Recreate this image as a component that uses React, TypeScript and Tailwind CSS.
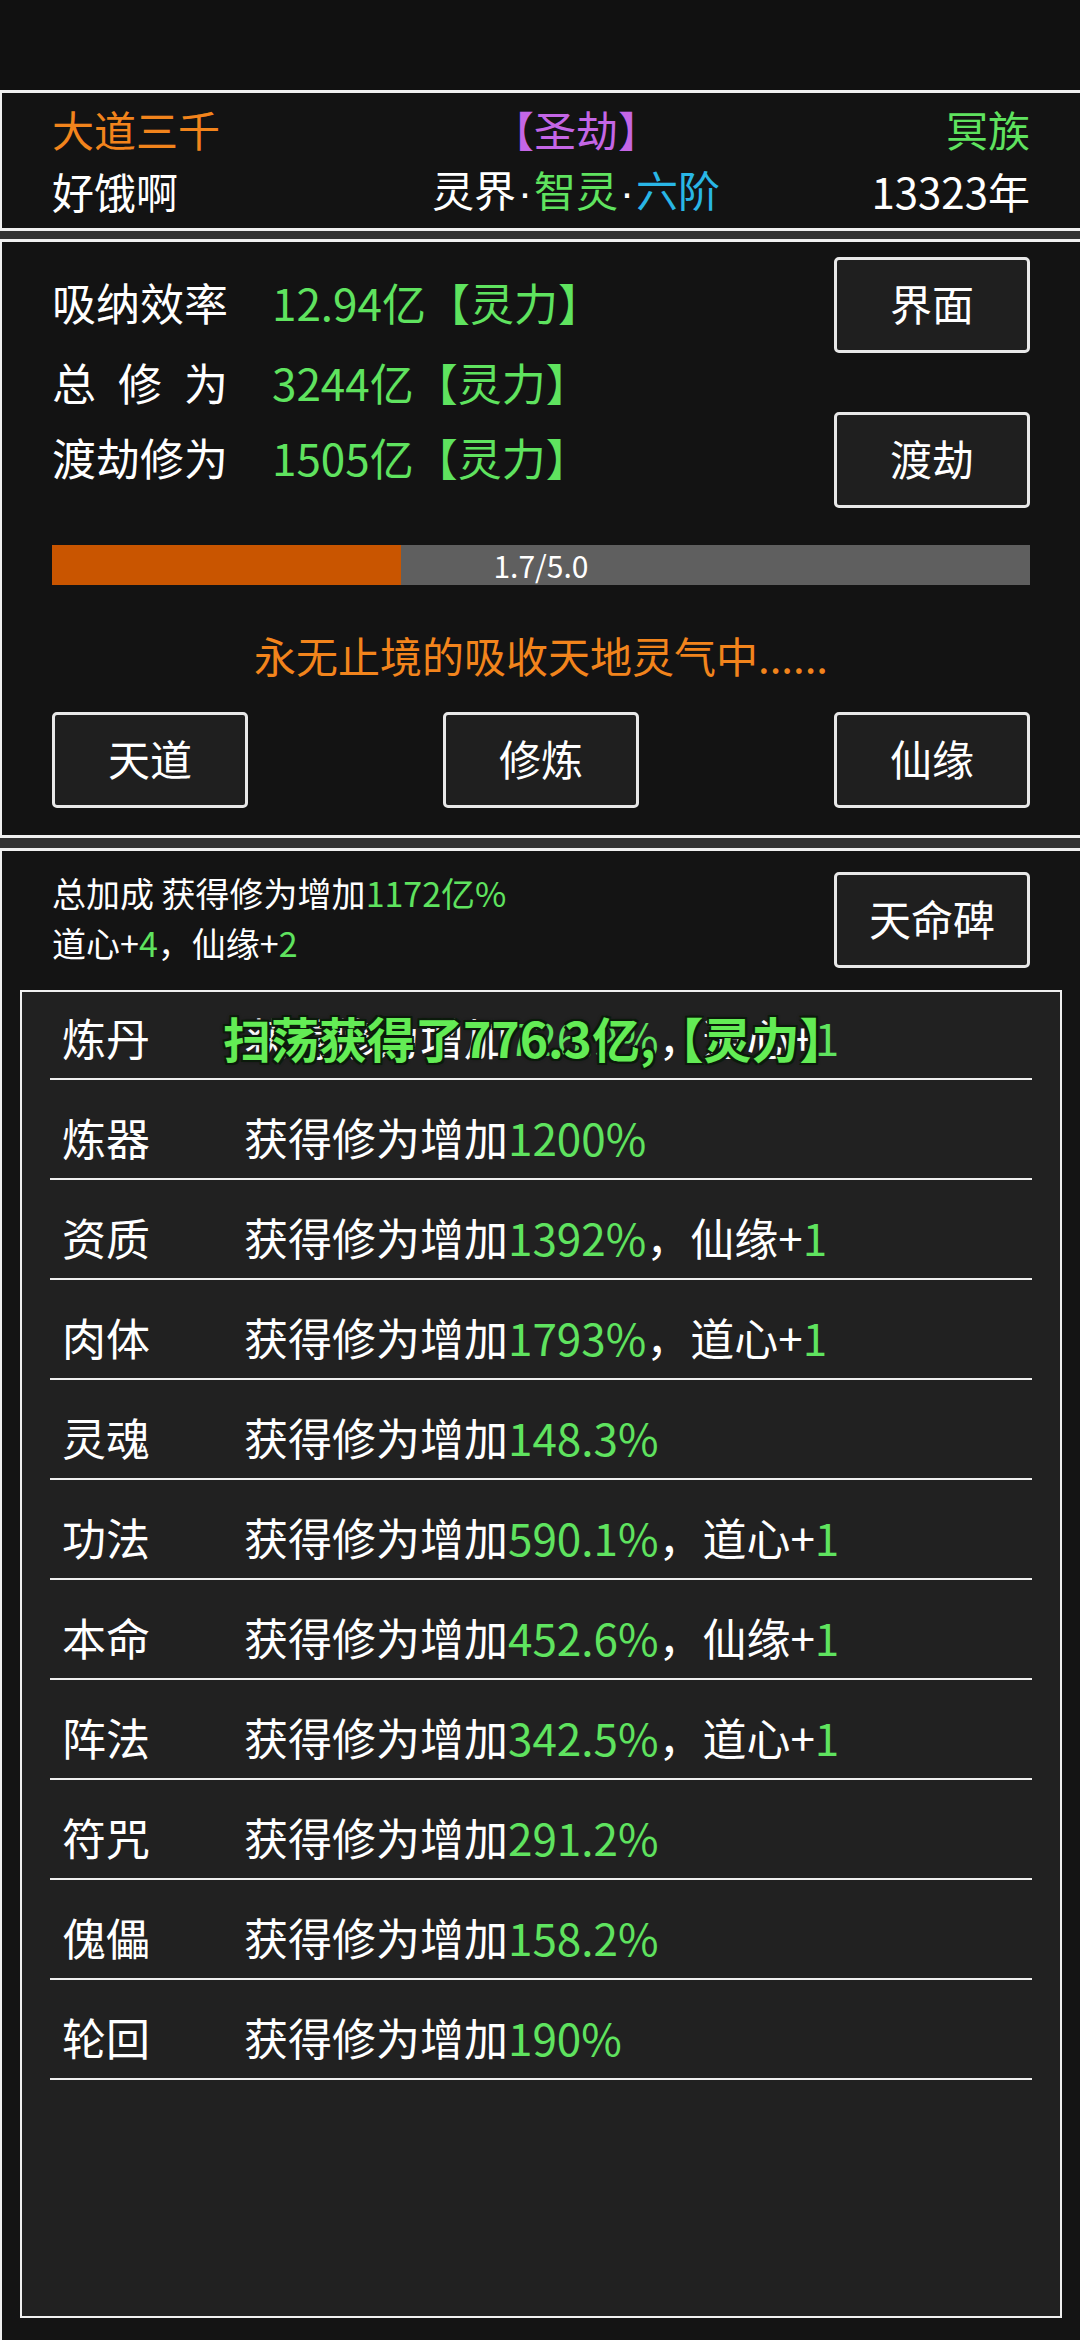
import React from 'react';

const G = 'text-[#5fe35f]';

type Row = { name: string; value: string; extra?: [string, string] };

const rows: Row[] = [
  { name: '炼丹', value: '726.9%', extra: ['道心+', '1'] },
  { name: '炼器', value: '1200%' },
  { name: '资质', value: '1392%', extra: ['仙缘+', '1'] },
  { name: '肉体', value: '1793%', extra: ['道心+', '1'] },
  { name: '灵魂', value: '148.3%' },
  { name: '功法', value: '590.1%', extra: ['道心+', '1'] },
  { name: '本命', value: '452.6%', extra: ['仙缘+', '1'] },
  { name: '阵法', value: '342.5%', extra: ['道心+', '1'] },
  { name: '符咒', value: '291.2%' },
  { name: '傀儡', value: '158.2%' },
  { name: '轮回', value: '190%' },
];

function Btn({ label }: { label: string }) {
  return (
    <div className="flex h-[96px] w-[196px] shrink-0 items-center justify-center rounded-[5px] border-[3px] border-[#e8e8e8] bg-[#1f1f1f] pb-[6px] text-[42px] text-white">
      {label}
    </div>
  );
}

function Stat({ label, value }: { label: React.ReactNode; value: string }) {
  return (
    <div className="flex h-[60px] items-center text-[44px] leading-[60px]">
      <div className="w-[176px] text-white">{label}</div>
      <div className={'ml-[44px] ' + G}>{value}</div>
    </div>
  );
}

const Dot = () => <span className="font-['Liberation_Sans',sans-serif] px-[2px]">·</span>;

export default function App() {
  return (
    <div className="h-[2340px] w-[1080px] overflow-hidden bg-[#111111] font-['Noto_Sans_CJK_SC','Noto_Sans',sans-serif] text-white">
      {/* top bar */}
      <div className="h-[90px] bg-[#111111]" />

      {/* header panel */}
      <div className="h-[141px] border-y-[3px] border-l-2 border-[#f0f0f0] bg-[#131313] pt-[4px]">
        <div className="grid h-[60px] grid-cols-[374px_300px_1fr] items-center pl-[50px] pr-[50px] text-[42px]">
          <div className="text-[#f2841c]">大道三千</div>
          <div className="text-center text-[#c466e6]">【圣劫】</div>
          <div className="text-right text-[#5fe35f]">冥族</div>
        </div>
        <div className="grid h-[62px] grid-cols-[374px_300px_1fr] items-center pl-[50px] pr-[50px] text-[42px]">
          <div>好饿啊</div>
          <div className="whitespace-nowrap text-center">
            灵界<Dot />
            <span className={G}>智灵</span>
            <Dot />
            <span className="text-[#29b6e6]">六阶</span>
          </div>
          <div className="text-right">13323年</div>
        </div>
      </div>

      <div className="h-[8px] bg-[#333333]" />

      {/* cultivation panel */}
      <div className="h-[599px] border-y-[3px] border-l-2 border-[#f0f0f0] bg-[#131313]">
        <div className="flex justify-between pl-[50px] pr-[50px]">
          <div className="pt-[30px]">
            <Stat label="吸纳效率" value="12.94亿【灵力】" />
            <div className="mt-[20px]">
              <Stat
                label={
                  <span className="flex justify-between">
                    <span>总</span>
                    <span>修</span>
                    <span>为</span>
                  </span>
                }
                value="3244亿【灵力】"
              />
            </div>
            <div className="mt-[15px]">
              <Stat label="渡劫修为" value="1505亿【灵力】" />
            </div>
          </div>
          <div className="flex flex-col gap-[59px] pt-[15px]">
            <Btn label="界面" />
            <Btn label="渡劫" />
          </div>
        </div>

        <div className="relative mx-[50px] mt-[37px] h-[40px] bg-[#5f5f5f]">
          <div className="h-full bg-[#c95500]" style={{ width: '35.7%' }} />
          <div className="absolute inset-0 flex items-center justify-center text-[30px] leading-none text-white">
            1.7/5.0
          </div>
        </div>

        <div className="mt-[45px] h-[50px] whitespace-nowrap text-center text-[42px] leading-[50px] text-[#f2841c]">
          永无止境的吸收天地灵气中......
        </div>

        <div className="mt-[32px] flex justify-between px-[50px]">
          <Btn label="天道" />
          <Btn label="修炼" />
          <Btn label="仙缘" />
        </div>
      </div>

      <div className="h-[10px] bg-[#333333]" />

      {/* bonus panel */}
      <div className="h-[1492px] border-t-[3px] border-l-2 border-[#f0f0f0] bg-[#141414] pt-[21px]">
        <div className="flex h-[96px] items-start justify-between pl-[50px] pr-[50px]">
          <div className="-mt-[4px] text-[34px] leading-[50px]">
            <div>
              总加成 获得修为增加<span className={G}>1172亿%</span>
            </div>
            <div>
              道心+<span className={G}>4</span>，仙缘+<span className={G}>2</span>
            </div>
          </div>
          <Btn label="天命碑" />
        </div>

        <div className="mx-[18px] mt-[22px] h-[1328px] border-2 border-[#f0f0f0] bg-[#212121] px-[28px]">
          {rows.map((r, i) => (
            <div
              key={r.name}
              className={
                'relative flex items-end border-b-2 border-[#f0f0f0] pb-[16px] text-[44px] leading-[50px] ' +
                (i === 0 ? 'h-[88px]' : 'h-[100px]')
              }
            >
              <div className="w-[194px] pl-[12px]">{r.name}</div>
              <div className="whitespace-nowrap">
                获得修为增加<span className={G}>{r.value}</span>
                {r.extra && (
                  <>
                    ，{r.extra[0]}
                    <span className={G}>{r.extra[1]}</span>
                  </>
                )}
              </div>
              {i === 0 && (
                <div className="absolute bottom-[16px] left-[173px] whitespace-nowrap text-[48px] font-bold leading-[50px] text-[#63ec55] [text-shadow:2px_2px_0_#0b1a0b,-2px_-2px_0_#0b1a0b,2px_-2px_0_#0b1a0b,-2px_2px_0_#0b1a0b,0_0_4px_#000]">
                  扫荡获得了776.3亿,【灵力】
                </div>
              )}
            </div>
          ))}
        </div>
      </div>
    </div>
  );
}
